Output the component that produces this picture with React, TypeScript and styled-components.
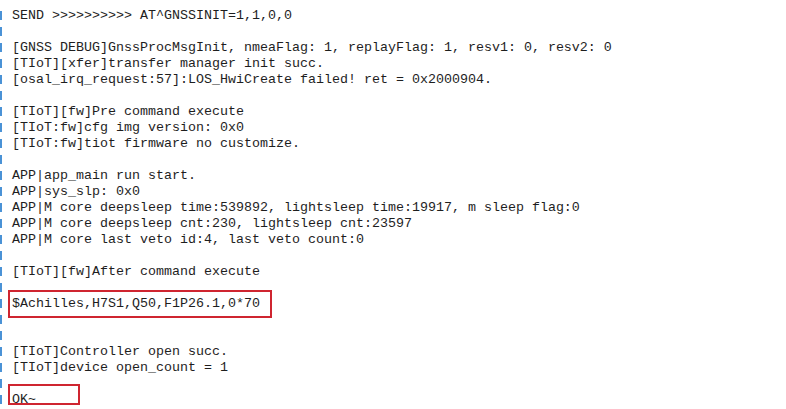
import React from "react";
import styled, { createGlobalStyle } from "styled-components";

const Global = createGlobalStyle`
  html, body { margin: 0; padding: 0; background: #ffffff; }
  body { font-family: "Liberation Mono", "Courier New", monospace; }
`;

const Console = styled.div`
  display: flex;
  flex-direction: column;
  padding-top: 7px;
  width: 786px;
  height: 409px;
  box-sizing: border-box;
  overflow: hidden;
  background: #ffffff;
  color: #1e1e1e;
  font-family: "Liberation Mono", "Courier New", monospace;
  font-size: 13.33px;
  line-height: 16px;
  white-space: pre;
`;

const Line = styled.div`
  position: relative;
  box-sizing: border-box;
  height: 16px;
  padding: 1px 0 0 12px;
  &::before {
    content: "";
    position: absolute;
    left: 0;
    top: 4px;
    width: 2px;
    height: 9px;
    background: #4a92d6;
  }
`;

const Box = styled.div<{ $w: number; $h: number; $pt: number; $mt: number }>`
  box-sizing: border-box;
  width: ${(p) => p.$w}px;
  height: ${(p) => p.$h}px;
  margin: ${(p) => p.$mt}px 0 0 -4px;
  padding: ${(p) => p.$pt}px 0 0 2px;
  border: 2px solid #cf2530;
`;

const lines: string[] = [
  "SEND >>>>>>>>>> AT^GNSSINIT=1,1,0,0",
  "",
  "[GNSS DEBUG]GnssProcMsgInit, nmeaFlag: 1, replayFlag: 1, resv1: 0, resv2: 0",
  "[TIoT][xfer]transfer manager init succ.",
  "[osal_irq_request:57]:LOS_HwiCreate failed! ret = 0x2000904.",
  "",
  "[TIoT][fw]Pre command execute",
  "[TIoT:fw]cfg img version: 0x0",
  "[TIoT:fw]tiot firmware no customize.",
  "",
  "APP|app_main run start.",
  "APP|sys_slp: 0x0",
  "APP|M core deepsleep time:539892, lightsleep time:19917, m sleep flag:0",
  "APP|M core deepsleep cnt:230, lightsleep cnt:23597",
  "APP|M core last veto id:4, last veto count:0",
  "",
  "[TIoT][fw]After command execute",
  "",
  "@@$Achilles,H7S1,Q50,F1P26.1,0*70",
  "",
  "",
  "[TIoT]Controller open succ.",
  "[TIoT]device open_count = 1",
  "",
  "##OK~",
];

export default function App() {
  return (
    <>
      <Global />
      <Console>
        {lines.map((l, i) => {
          if (l.startsWith("@@")) {
            return (
              <Line key={i}>
                <Box $w={264} $h={28} $pt={4} $mt={-6}>
                  {l.slice(2)}
                </Box>
              </Line>
            );
          }
          if (l.startsWith("##")) {
            return (
              <Line key={i}>
                <Box $w={72} $h={21} $pt={6} $mt={-8}>
                  {l.slice(2)}
                </Box>
              </Line>
            );
          }
          return <Line key={i}>{l}</Line>;
        })}
      </Console>
    </>
  );
}
